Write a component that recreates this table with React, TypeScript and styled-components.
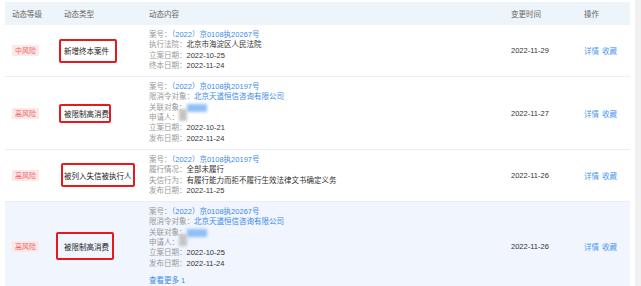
import React from "react";
import styled, { createGlobalStyle } from "styled-components";

const GlobalStyle = createGlobalStyle`
  html, body {
    margin: 0;
    padding: 0;
    background: #fff;
  }
  body {
    font-family: "Liberation Sans", "Noto Sans CJK SC", sans-serif;
    font-size: 7.5px;
    color: #333;
  }
`;

const COLS = "52px 85px 362px 73px 53px";

const Page = styled.div`
  display: flex;
  align-items: flex-start;
  width: 641px;
  height: 286px;
  overflow: hidden;
`;

const Table = styled.div`
  width: 625px;
  margin: 2px 0 0 5px;
  display: flex;
  flex-direction: column;
`;

const ScrollTrack = styled.div`
  align-self: stretch;
  width: 6px;
  margin-left: 5px;
  background: #f0f0f0;
`;

const HeaderRow = styled.div`
  display: grid;
  grid-template-columns: ${COLS};
  flex-shrink: 0;
  height: 23px;
  align-items: center;
  background: #eef5fa;
  color: #666;
`;

const Row = styled.div<{ $active?: boolean }>`
  display: grid;
  grid-template-columns: ${COLS};
  align-items: center;
  flex-shrink: 0;
  background: ${({ $active }) => ($active ? "#f0f5fe" : "#fff")};
  border-bottom: 1px solid ${({ $active }) => ($active ? "transparent" : "#ebeef3")};
`;

const Cell = styled.div`
  padding-left: 7px;
  white-space: nowrap;
`;

const ContentCell = styled(Cell)`
  padding-top: 5px;
  padding-bottom: 5px;
`;

const Badge = styled.span`
  display: inline-block;
  height: 11px;
  line-height: 11px;
  padding: 0 3px;
  background: #fde8e8;
  color: #f26464;
  border-radius: 1px;
  font-size: 7px;
`;

const TypeLabel = styled.span<{ $t: number; $l: number; $r: number; $b: number }>`
  position: relative;
  display: inline-block;
  color: #222;
  &::after {
    content: "";
    position: absolute;
    top: ${({ $t }) => -$t}px;
    bottom: ${({ $b }) => -$b}px;
    left: ${({ $l }) => -$l}px;
    right: ${({ $r }) => -$r}px;
    border: 2px solid #e8191c;
    border-radius: 2px;
  }
`;

const Line = styled.div`
  height: 10.3px;
  line-height: 10.3px;
`;

const Key = styled.span`
  color: #999;
`;

const Link = styled.span`
  color: #3d8ae5;
`;

const Blur = styled.span<{ $w: number; $h: number; $c: string; $dy: number }>`
  display: inline-block;
  width: ${({ $w }) => $w}px;
  height: ${({ $h }) => $h}px;
  vertical-align: top;
  margin-top: ${({ $dy }) => $dy}px;
  background: ${({ $c }) => $c};
  filter: blur(1.5px);
`;

const MoreLink = styled.div`
  margin-top: 7px;
  line-height: 10.3px;
  color: #3d8ae5;
`;

const Actions = styled(Cell)`
  display: flex;
  gap: 3px;
  color: #4b98ec;
`;

type Entry = { k: string; v?: string; link?: boolean; blur?: "blue" | "gray" };

type RowData = {
  level: string;
  type: string;
  box: { t: number; l: number; r: number; b: number };
  lines: Entry[];
  date: string;
  more?: boolean;
  active?: boolean;
};

const rows: RowData[] = [
  {
    level: "中风险",
    type: "新增终本案件",
    box: { t: 6, l: 5, r: 8, b: 7 },
    lines: [
      { k: "案号：", v: "（2022）京0108执20267号", link: true },
      { k: "执行法院：", v: "北京市海淀区人民法院" },
      { k: "立案日期：", v: "2022-10-25" },
      { k: "终本日期：", v: "2022-11-24" },
    ],
    date: "2022-11-29",
  },
  {
    level: "高风险",
    type: "被限制高消费",
    box: { t: 4, l: 5, r: 2, b: 4 },
    lines: [
      { k: "案号：", v: "（2022）京0108执20197号", link: true },
      { k: "限消令对象：", v: "北京天道恒信咨询有限公司", link: true },
      { k: "关联对象：", blur: "blue" },
      { k: "申请人：", blur: "gray" },
      { k: "立案日期：", v: "2022-10-21" },
      { k: "发布日期：", v: "2022-11-24" },
    ],
    date: "2022-11-27",
  },
  {
    level: "高风险",
    type: "被列入失信被执行人",
    box: { t: 7, l: 3, r: 3, b: 6 },
    lines: [
      { k: "案号：", v: "（2022）京0108执20197号", link: true },
      { k: "履行情况：", v: "全部未履行" },
      { k: "失信行为：", v: "有履行能力而拒不履行生效法律文书确定义务" },
      { k: "发布日期：", v: "2022-11-25" },
    ],
    date: "2022-11-26",
  },
  {
    level: "高风险",
    type: "被限制高消费",
    box: { t: 9, l: 8, r: 5, b: 8 },
    lines: [
      { k: "案号：", v: "（2022）京0108执20267号", link: true },
      { k: "限消令对象：", v: "北京天道恒信咨询有限公司", link: true },
      { k: "关联对象：", blur: "blue" },
      { k: "申请人：", blur: "gray" },
      { k: "立案日期：", v: "2022-10-25" },
      { k: "发布日期：", v: "2022-11-24" },
    ],
    date: "2022-11-26",
    more: true,
    active: true,
  },
];

const App = () => (
  <>
    <GlobalStyle />
    <Page>
      <Table>
        <HeaderRow>
          <Cell>动态等级</Cell>
          <Cell>动态类型</Cell>
          <Cell>动态内容</Cell>
          <Cell>变更时间</Cell>
          <Cell>操作</Cell>
        </HeaderRow>
        {rows.map((r, i) => (
          <Row key={i} $active={r.active}>
            <Cell>
              <Badge>{r.level}</Badge>
            </Cell>
            <Cell>
              <TypeLabel $t={r.box.t} $l={r.box.l} $r={r.box.r} $b={r.box.b}>
                {r.type}
              </TypeLabel>
            </Cell>
            <ContentCell>
              {r.lines.map((l, j) => (
                <Line key={j}>
                  <Key>{l.k}</Key>
                  {l.blur === "blue" && <Blur $w={20} $h={8} $c="#8fc0f5" $dy={1} />}
                  {l.blur === "gray" && <Blur $w={8} $h={12} $c="#c4c4c4" $dy={-4} />}
                  {l.v && (l.link ? <Link>{l.v}</Link> : <span>{l.v}</span>)}
                </Line>
              ))}
              {r.more && <MoreLink>查看更多 1</MoreLink>}
            </ContentCell>
            <Cell>{r.date}</Cell>
            <Actions>
              <span>详情</span>
              <span>收藏</span>
            </Actions>
          </Row>
        ))}
      </Table>
      <ScrollTrack />
    </Page>
  </>
);

export default App;
